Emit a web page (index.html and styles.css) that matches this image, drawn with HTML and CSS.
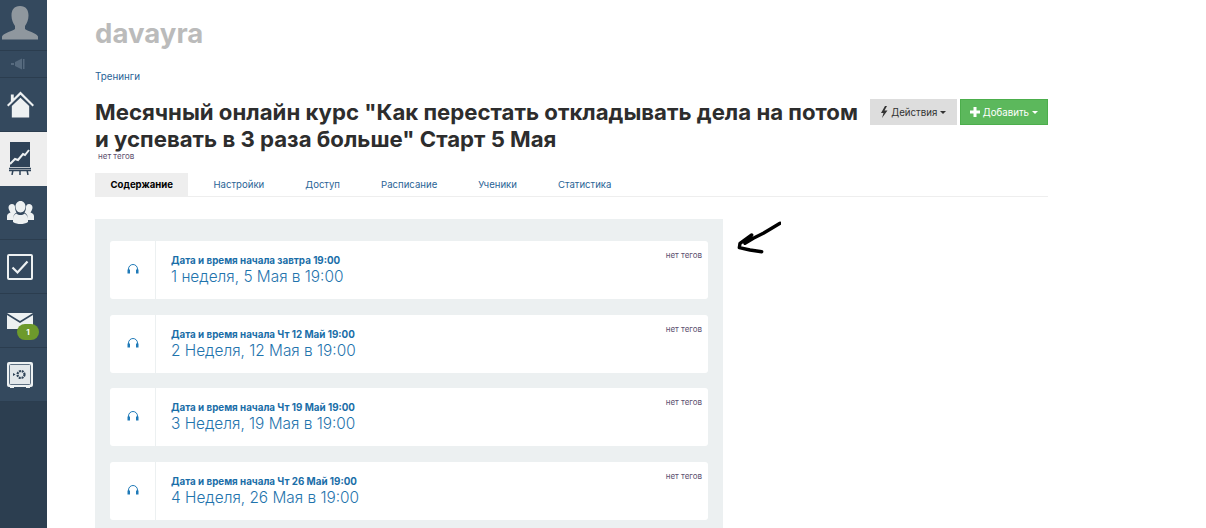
FILE: index.html
```html
<!DOCTYPE html>
<html lang="ru">
<head>
    <meta charset="UTF-8">
    <title>davayra</title>
    <link rel="stylesheet" href="styles.css">
</head>
<body>

    <!-- Sidebar -->
    <nav class="sidebar">
        <div class="side-item side-avatar">
            <svg width="38" height="42" viewBox="1 0 38 42"><path fill="#8f979e" d="M20 6c6 0 8.500 4 8.500 9.500 0 4-1.500 8-3.500 10.500v3c2 2 11 3.500 13 7.500v3H2v-3c2-4 11-5.500 13-7.500v-3c-2-2.500-3.500-6.500-3.500-10.500C11.500 10 14 6 20 6z"/></svg>
        </div>
        <div class="side-item side-sound">
            <svg width="18" height="12" viewBox="0 0 18 12"><path fill="#566a7e" d="M1 5h3v2H1zM5 4l7-3.500v11L5 8zM13 1h1.500v10H13z"/></svg>
        </div>
        <div class="side-item side-main">
            <svg width="27" height="27" viewBox="0 0 28 27"><path fill="#edf1f2" d="M14 0 28 14l-1.500 1.500L14 3.500 1.500 15.500 0 14l4-4V3h3v4zM5 15 14 6.500 23 15v12H5z"/></svg>
        </div>
        <div class="side-item side-main active">
            <svg width="22" height="33" viewBox="0 0 22 33"><path fill="#2f4358" d="M1 0h20v25H1z"/><path fill="none" stroke="#edf1f2" stroke-width="2" d="M1 22l5-5 3 1 5-6 2 1 4-5"/><path fill="none" stroke="#2f4358" stroke-width="1.500" d="M0 26.500h22M0 28.500h22M4 28l-1 5M11 28v5M18 28l1 5"/></svg>
        </div>
        <div class="side-item side-main">
            <svg width="27" height="23" viewBox="0 0 27 23"><path fill="#edf1f2" d="M13.500 0c3 0 5 2.500 5 5.500s-2 6-5 6-5-3-5-6 2-5.500 5-5.500zM5 3c2 0 3 1.500 3 3 0 2 .5 4 1.500 5.500C7 13 6 15 6 19H0v-4c0-2 2-3 3.500-3.500C2.500 10 1.500 8 1.500 6.500 1.500 4.500 3 3 5 3zM22 3c2 0 3.500 1.500 3.500 3.500 0 1.500-1 3.500-2 5 1.500.5 3.500 1.500 3.500 3.500v4h-6c0-4-1-6-3.500-7.500C18.500 10 19 8 19 6c0-1.500 1-3 3-3zM9.500 12.500c1 1 2.500 1.500 4 1.500s3-.5 4-1.500c2 1 3.500 3 3.500 6V21c-2 1.500-5 2-7.500 2S8 22.500 6 21v-2.500c0-3.500 1.500-5.500 3.500-6z"/></svg>
        </div>
        <div class="side-item side-main">
            <svg width="26" height="26" viewBox="0 0 26 26"><rect x="1" y="1" width="24" height="24" rx="1" fill="none" stroke="#edf1f2" stroke-width="2"/><path fill="none" stroke="#edf1f2" stroke-width="2.200" d="M5.500 13.500l5 5 10-11"/></svg>
        </div>
        <div class="side-item side-main side-mail">
            <svg width="26" height="16" viewBox="0 0 26 16"><path fill="#edf1f2" d="M0 0h26L13 8zM0 2l13 8 13-8v14H0z"/></svg>
            <span class="mail-badge">1</span>
        </div>
        <div class="side-item side-main">
            <svg width="26" height="26" viewBox="0 0 26 26"><rect width="26" height="25" rx="2" fill="#edf1f2"/><rect x="2.500" y="2.500" width="21" height="20" rx="1" fill="#e2e7ea" stroke="#5d6f81"/><circle cx="14" cy="12.500" r="3.500" fill="none" stroke="#2f4358" stroke-width="2.200" stroke-dasharray="2 .8"/><path fill="#2f4358" d="M6 11l2.500 1.500L6 14z"/><path fill="#edf1f2" d="M3 25h4v1H3zM19 25h4v1h-4z"/></svg>
        </div>
        <div class="side-rest"></div>
    </nav>

    <!-- Page content -->
    <main class="content">
        <div class="school-name">davayra</div>
        <a class="crumb">Тренинги</a>

        <div class="title-row">
            <h1>Месячный онлайн курс "Как перестать откладывать дела на потом и успевать в 3 раза больше" Старт 5 Мая</h1>
            <div class="actions">
                <button class="btn btn-gray">
                    <svg width="8" height="12" viewBox="0 0 8 12"><path fill="#333" d="M5 0 1 7h2.500L2 12l5.500-7.500H4.500L7 0z"/></svg>
                    Действия <i class="caret"></i>
                </button>
                <button class="btn btn-green">
                    <svg width="10" height="10" viewBox="0 0 10 10"><path fill="#fff" d="M3.500 0h3v3.500H10v3H6.500V10h-3V6.500H0v-3h3.500z"/></svg>
                    Добавить <i class="caret"></i>
                </button>
            </div>
        </div>
        <div class="no-tags title-tags">нет тегов</div>

        <ul class="tabs">
            <li class="tab active">Содержание</li>
            <li class="tab">Настройки</li>
            <li class="tab">Доступ</li>
            <li class="tab">Расписание</li>
            <li class="tab">Ученики</li>
            <li class="tab">Статистика</li>
        </ul>

        <div class="lessons-row">
            <div class="lessons">
                <div class="lesson">
                    <div class="lesson-icon"><svg width="12" height="11" viewBox="0 0 12 11"><path fill="none" stroke="#1f7ab8" d="M1.500 8V6a4.500 4.500 0 0 1 9 0v2"/><path fill="#1f7ab8" d="M.5 6.500h2.500V10.500H.5zM9 6.500h2.500V10.500H9z"/></svg></div>
                    <div class="lesson-body">
                        <div class="lesson-date">Дата и время начала завтра 19:00</div>
                        <div class="lesson-name">1 неделя, 5 Мая в 19:00</div>
                    </div>
                    <div class="no-tags lesson-tags">нет тегов</div>
                </div>
                <div class="lesson">
                    <div class="lesson-icon"><svg width="12" height="11" viewBox="0 0 12 11"><path fill="none" stroke="#1f7ab8" d="M1.500 8V6a4.500 4.500 0 0 1 9 0v2"/><path fill="#1f7ab8" d="M.5 6.500h2.500V10.500H.5zM9 6.500h2.500V10.500H9z"/></svg></div>
                    <div class="lesson-body">
                        <div class="lesson-date">Дата и время начала Чт 12 Май 19:00</div>
                        <div class="lesson-name">2 Неделя, 12 Мая в 19:00</div>
                    </div>
                    <div class="no-tags lesson-tags">нет тегов</div>
                </div>
                <div class="lesson">
                    <div class="lesson-icon"><svg width="12" height="11" viewBox="0 0 12 11"><path fill="none" stroke="#1f7ab8" d="M1.500 8V6a4.500 4.500 0 0 1 9 0v2"/><path fill="#1f7ab8" d="M.5 6.500h2.500V10.500H.5zM9 6.500h2.500V10.500H9z"/></svg></div>
                    <div class="lesson-body">
                        <div class="lesson-date">Дата и время начала Чт 19 Май 19:00</div>
                        <div class="lesson-name">3 Неделя, 19 Мая в 19:00</div>
                    </div>
                    <div class="no-tags lesson-tags">нет тегов</div>
                </div>
                <div class="lesson">
                    <div class="lesson-icon"><svg width="12" height="11" viewBox="0 0 12 11"><path fill="none" stroke="#1f7ab8" d="M1.500 8V6a4.500 4.500 0 0 1 9 0v2"/><path fill="#1f7ab8" d="M.5 6.500h2.500V10.500H.5zM9 6.500h2.500V10.500H9z"/></svg></div>
                    <div class="lesson-body">
                        <div class="lesson-date">Дата и время начала Чт 26 Май 19:00</div>
                        <div class="lesson-name">4 Неделя, 26 Мая в 19:00</div>
                    </div>
                    <div class="no-tags lesson-tags">нет тегов</div>
                </div>
            </div>
            <svg class="arrow" width="44" height="33" viewBox="0 0 44 33"><path fill="none" stroke="#000" stroke-width="3.400" stroke-linecap="round" stroke-linejoin="round" d="M43 2.300 34.700 7.300 26.300 12.300 16.300 17.300 8 22.300M14.700 14 3 22.300 2.300 26.700 13 29 24.700 30.700"/></svg>
        </div>
    </main>

</body>
</html>
```

FILE: styles.css
```css
/* General Styles */
body {
    margin: 0;
    height: 528px;
    overflow: hidden;
    display: flex;
    background-color: #fff;
    font-family: "Inter", "Liberation Sans", sans-serif;
    color: #333;
}

/* Sidebar */
.sidebar {
    width: 47px;
    flex-shrink: 0;
    display: flex;
    flex-direction: column;
    background-color: #34495e;
}

.side-item {
    display: flex;
    justify-content: center;
    align-items: center;
    padding-right: 7px;
    border-bottom: 1px solid #2b3d4f;
}

.side-avatar {
    height: 50px;
    overflow: hidden;
    align-items: flex-start;
}

.side-sound {
    height: 26px;
    padding-right: 9px;
}

.side-main {
    height: 53px;
}

.side-main.active {
    background-color: #eeeeee;
    border-bottom-color: #eeeeee;
}

.side-mail {
    position: relative;
}

.mail-badge {
    position: absolute;
    left: 17px;
    top: 30px;
    width: 22px;
    height: 16px;
    border-radius: 8px;
    background-color: #6d9a2c;
    color: #fff;
    font-size: 8px;
    font-weight: 700;
    line-height: 16px;
    text-align: center;
}

.side-rest {
    flex: 1;
    background-color: #2c3e50;
}

/* Content */
.content {
    width: 953px;
    padding-left: 48px;
}

.school-name {
    margin-top: 16px;
    font-size: 27.600px;
    line-height: 34px;
    font-weight: 700;
    color: #bbbbbb;
}

.crumb {
    display: block;
    margin-top: 20px;
    font-size: 9.800px;
    line-height: 13px;
    color: #2a6496;
}

.title-row {
    display: flex;
    justify-content: space-between;
    align-items: flex-start;
    margin-top: 15px;
}

h1 {
    width: 772px;
    margin: 0;
    font-size: 22.200px;
    line-height: 27px;
    font-weight: 700;
    color: #2d2d2d;
}

.actions {
    display: flex;
    gap: 3px;
    margin-top: 1px;
}

.btn {
    height: 26px;
    padding: 0 9px;
    display: flex;
    align-items: center;
    gap: 3px;
    border: 1px solid transparent;
    font-family: inherit;
    font-size: 9.700px;
}

.btn-gray {
    padding: 0 9.500px;
    background-color: #dddddd;
    color: #333;
}

.btn-green {
    background-color: #5cb85c;
    border-color: #4cae4c;
    color: #fff;
}

.caret {
    width: 0;
    height: 0;
    border-top: 3px solid currentColor;
    border-left: 3px solid transparent;
    border-right: 3px solid transparent;
}

.no-tags {
    font-size: 8px;
    line-height: 10px;
    color: #5c4f6e;
}

.title-tags {
    margin: -1px 0 0 3px;
}

/* Tabs */
.tabs {
    display: flex;
    margin: 12px 0 0;
    padding: 0;
    list-style: none;
    border-bottom: 1px solid #eeeeee;
}

.tab {
    height: 23px;
    padding: 0 21px 0 20px;
    font-size: 9.600px;
    line-height: 23px;
    color: #2a6496;
}

.tab.active {
    padding: 0 15.500px;
    margin-right: 5px;
    background-color: #eeeeee;
    color: #000;
    font-weight: 700;
}

/* Lessons */
.lessons-row {
    display: flex;
    align-items: flex-start;
    margin-top: 22px;
}

.lessons {
    width: 598px;
    padding: 22px 15px 16px;
    display: flex;
    flex-direction: column;
    gap: 15.500px;
    background-color: #ecf0f1;
}

.lesson {
    height: 58px;
    flex-shrink: 0;
    display: flex;
    background-color: #fff;
    border-radius: 3px;
}

.lesson-icon {
    width: 46px;
    padding-bottom: 3px;
    box-sizing: border-box;
    display: flex;
    justify-content: center;
    align-items: center;
    border-right: 1px solid #ecf0f1;
}

.lesson-body {
    flex: 1;
    padding: 13px 0 0 15px;
}

.lesson-date {
    font-size: 9.800px;
    line-height: 13px;
    font-weight: 700;
    color: #1a6ea8;
}

.lesson-name {
    font-size: 15.400px;
    line-height: 20px;
    font-weight: 300;
    color: #1f74ad;
}

.lesson-tags {
    padding: 9px 6px 0 0;
}

.arrow {
    margin: 2px 0 0 14px;
}
```
